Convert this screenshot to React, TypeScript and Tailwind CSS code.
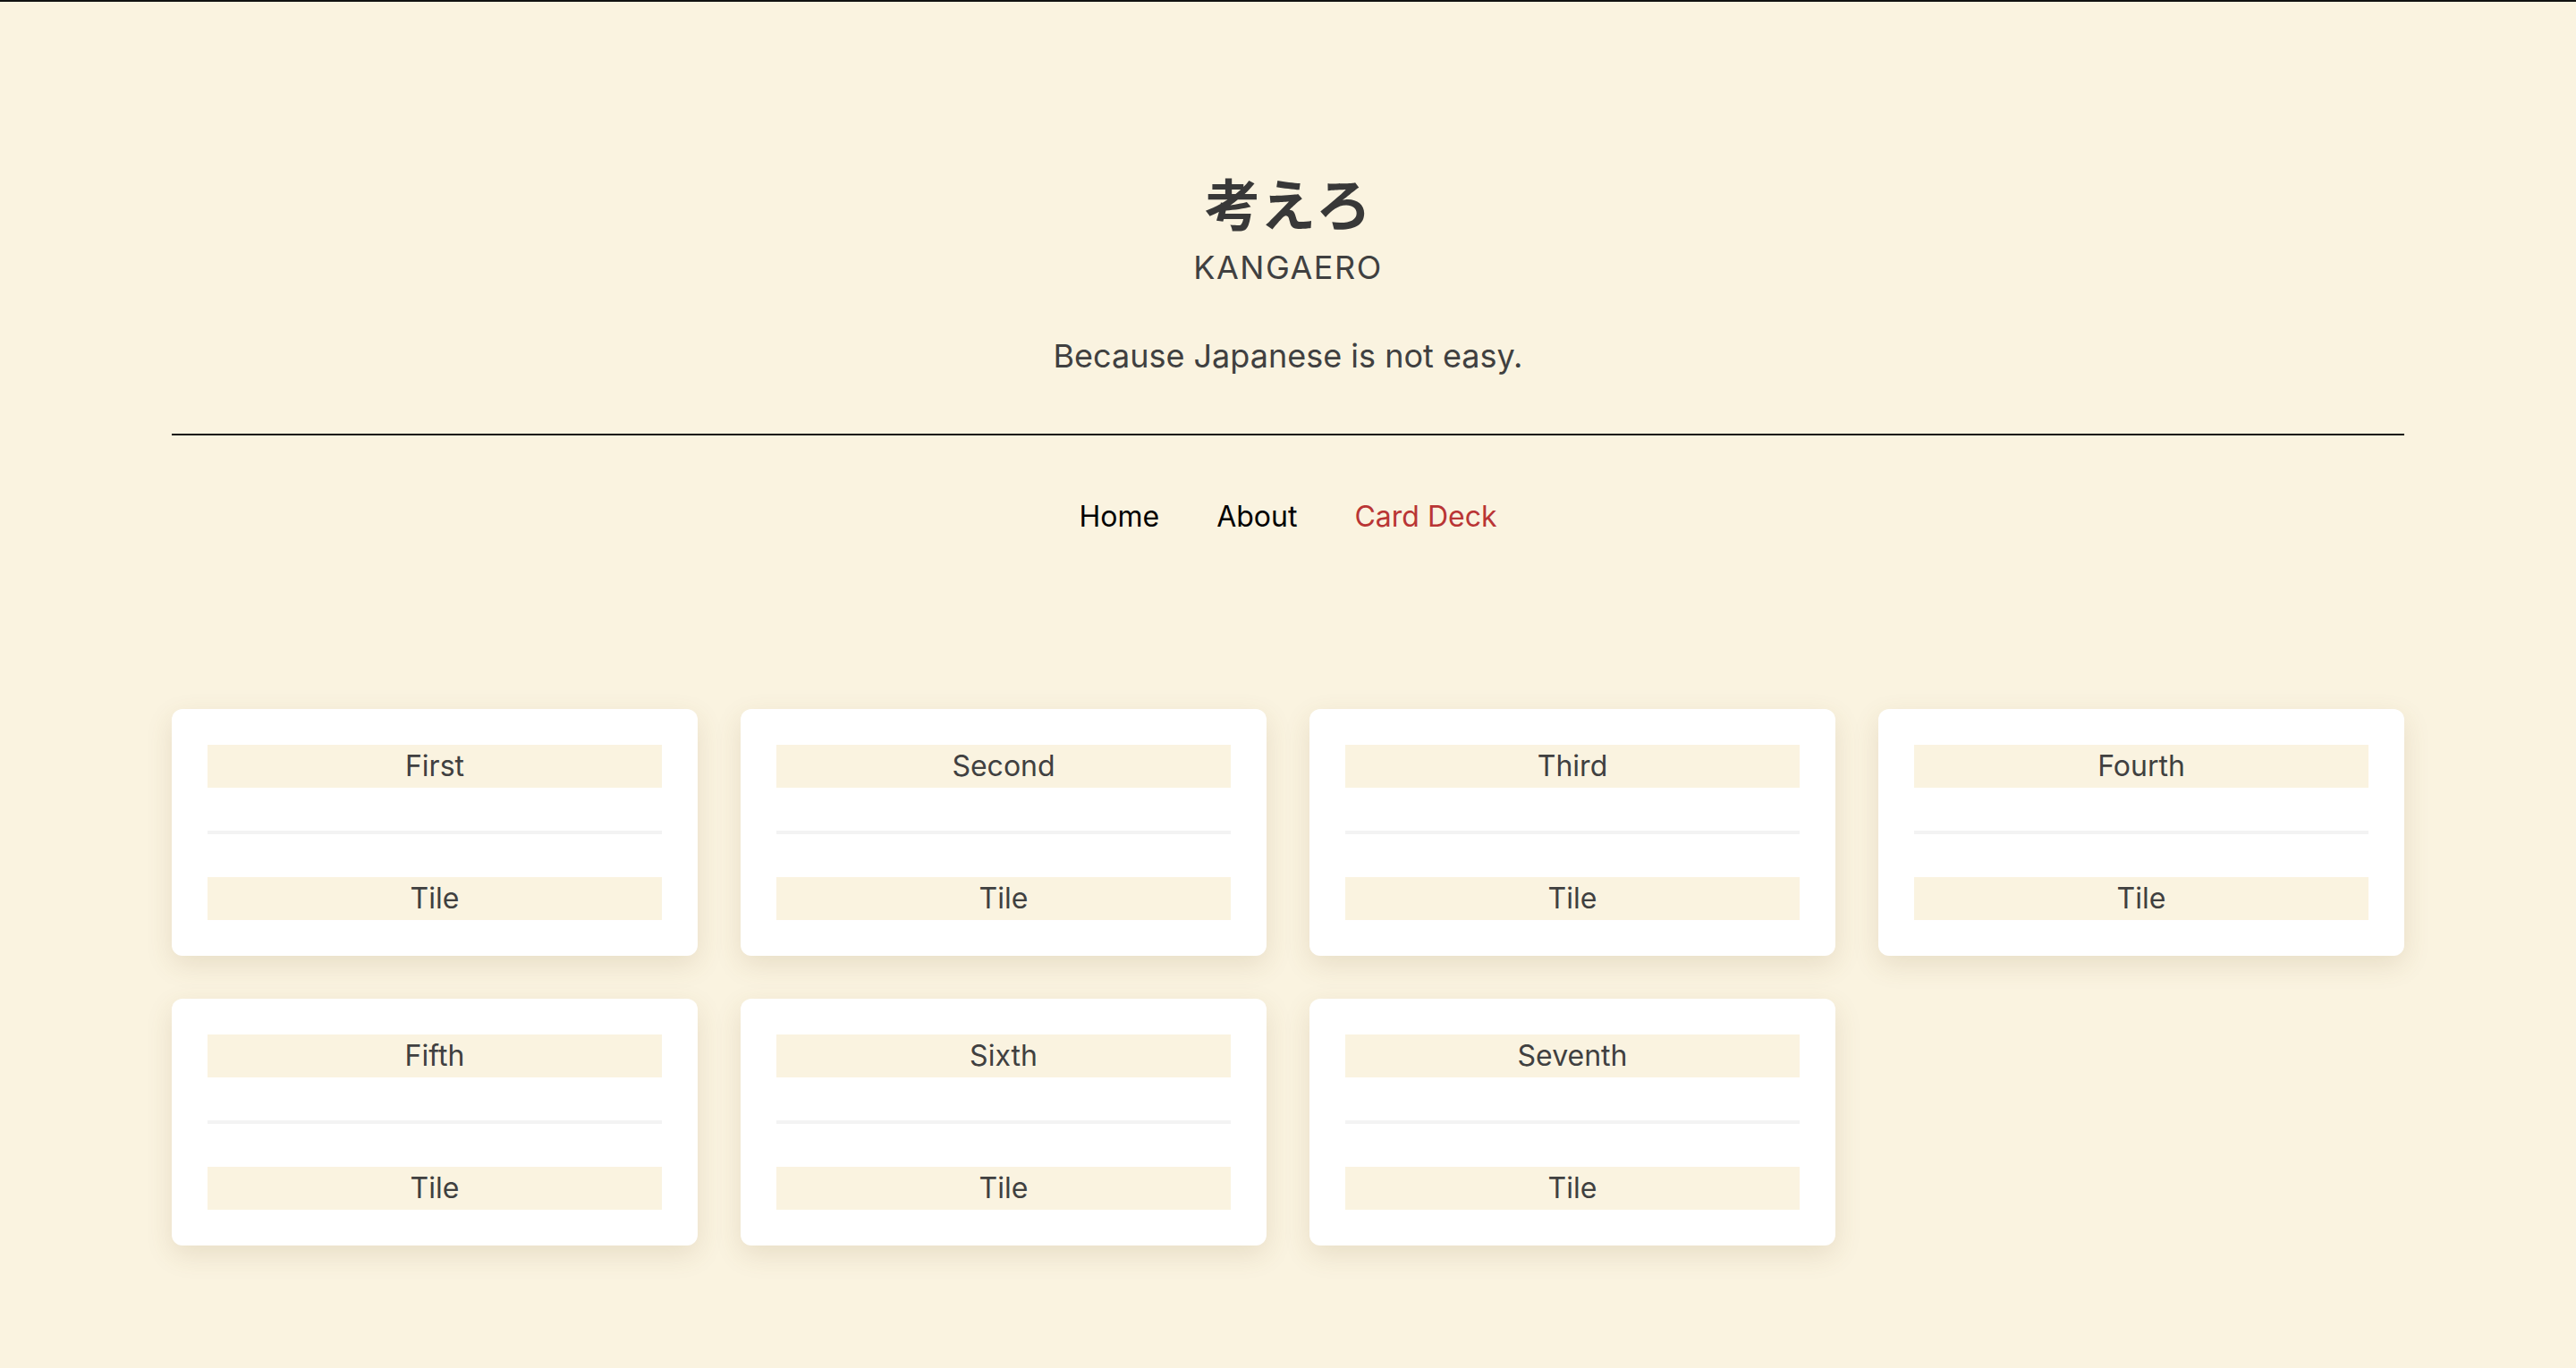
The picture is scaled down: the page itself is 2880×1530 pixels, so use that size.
const decks = ['First', 'Second', 'Third', 'Fourth', 'Fifth', 'Sixth', 'Seventh'];

export default function App() {
    return (
        <div className="min-h-[1530px] bg-[#faf3e0] border-t-2 border-[#111111] text-[#404040] font-['Inter','Noto_Sans_CJK_JP',sans-serif]">
            <div className="px-[192px]">
                {/* HEADER */}
                <header className="pt-[186px] flex flex-col items-center text-center">
                    <h1 className="text-[62px] leading-[76px] font-bold text-[#383838] font-['Noto_Sans_CJK_JP',sans-serif]">考えろ</h1>
                    <p className="mt-[13px] text-[36px] leading-[44px] tracking-[1.5px]">KANGAERO</p>
                    <p className="mt-[55px] text-[36px] leading-[44px]">Because Japanese is not easy.</p>
                </header>

                <hr className="mt-[65px] border-0 h-[2px] bg-[#111111]" />

                {/* NAV */}
                <nav className="mt-[71px] flex justify-center gap-16 text-[32px] leading-[40px]">
                    <a className="text-black">Home</a>
                    <a className="text-black">About</a>
                    <a className="text-[#b93535]">Card Deck</a>
                </nav>

                {/* CARDS */}
                <div className="mt-[195px] grid grid-cols-4 gap-12 pb-[120px]">
                    {decks.map(name => (
                        <Card key={name} title={name} />
                    ))}
                </div>
            </div>
        </div>
    );
}

function Card({ title }: { title: string }) {
    return (
        <div className="bg-white rounded-xl p-10 shadow-[0_10px_30px_rgba(120,95,40,0.14)]">
            <div className="bg-[#faf3e0] h-12 flex items-center justify-center text-[32px]">{title}</div>
            <div className="my-12 h-1 bg-[#f3f3f3]" />
            <div className="bg-[#faf3e0] h-12 flex items-center justify-center text-[32px]">Tile</div>
        </div>
    );
}
